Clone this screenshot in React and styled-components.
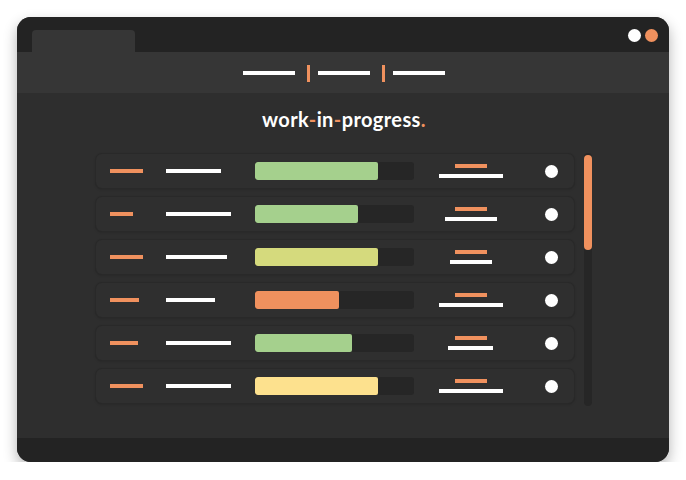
import React from 'react';
import styled, { createGlobalStyle } from 'styled-components';

const GlobalStyle = createGlobalStyle`
  body {
    margin: 0;
    padding: 0;
    background: #ffffff;
    font-family: Lato, "Open Sans", sans-serif;
  }
`;

const ORANGE = '#f0915e';

const rows = [
  { tag: 33, name: 55, fill: 123, color: '#a5d08d', top: 64 },
  { tag: 23, name: 65, fill: 103, color: '#a5d08d', top: 52 },
  { tag: 33, name: 61, fill: 123, color: '#d5da7d', top: 42 },
  { tag: 29, name: 49, fill: 84, color: '#f0915e', top: 64 },
  { tag: 28, name: 65, fill: 97, color: '#a5d08d', top: 45 },
  { tag: 33, name: 65, fill: 123, color: '#fde18e', top: 64 },
];

export default function App() {
  return (
    <>
      <GlobalStyle />
      <Page>
        <Window>
          <TitleBar>
            <Tab />
            <Lights>
              <Light />
              <Light $color={ORANGE} />
            </Lights>
          </TitleBar>
          <Nav>
            <NavLine />
            <NavSep />
            <NavLine />
            <NavSep />
            <NavLine />
          </Nav>
          <Content>
            <Title>
              work<Accent>-</Accent>in<Accent>-</Accent>progress<Accent>.</Accent>
            </Title>
            <ListArea>
              <List>
                {rows.map((r, i) => (
                  <Row key={i}>
                    <Dash $w={r.tag} $color={ORANGE} />
                    <Dash $w={r.name} $color="#ffffff" />
                    <Track>
                      <Fill style={{ width: r.fill, background: r.color }} />
                    </Track>
                    <Stack>
                      <Dash $w={32} $color={ORANGE} />
                      <Dash $w={r.top} $color="#ffffff" />
                    </Stack>
                    <Dot />
                  </Row>
                ))}
              </List>
              <Scrollbar>
                <Thumb />
              </Scrollbar>
            </ListArea>
          </Content>
          <Footer />
        </Window>
      </Page>
    </>
  );
}

const Page = styled.div`
  padding: 17px 0 0 17px;
`;

const Window = styled.div`
  width: 652px;
  height: 445px;
  border-radius: 14px;
  overflow: hidden;
  display: flex;
  flex-direction: column;
  background: #2e2e2e;
  box-shadow: 0 6px 14px rgba(0, 0, 0, 0.3);
`;

const TitleBar = styled.div`
  height: 35px;
  flex-shrink: 0;
  background: #232323;
  display: flex;
  align-items: flex-end;
  justify-content: space-between;
  padding: 0 11px 0 15px;
`;

const Tab = styled.div`
  width: 103px;
  height: 22px;
  background: #363636;
  border-radius: 4px 4px 0 0;
`;

const Lights = styled.div`
  align-self: flex-start;
  margin-top: 12px;
  display: flex;
  gap: 4px;
`;

const Light = styled.div`
  width: 13px;
  height: 13px;
  border-radius: 50%;
  background: ${(p) => p.$color || '#ffffff'};
`;

const Nav = styled.div`
  height: 41px;
  flex-shrink: 0;
  background: #363636;
  display: flex;
  align-items: center;
  justify-content: center;
  padding: 1px 0 0 1px;
  box-sizing: border-box;
`;

const NavLine = styled.div`
  width: 52px;
  height: 4px;
  background: #ffffff;
`;

const NavSep = styled.div`
  width: 3px;
  height: 17px;
  margin: 0 7.5px 0 12.5px;
  background: ${ORANGE};
`;

const Content = styled.div`
  flex: 1;
  background: #2e2e2e;
  display: flex;
  flex-direction: column;
  align-items: center;
  padding-top: 14px;
`;

const Title = styled.div`
  font-family: Lato, sans-serif;
  font-weight: 700;
  font-size: 20px;
  line-height: 25px;
  color: #ffffff;
  letter-spacing: 0.4px;
  margin-left: 2px;
`;

const Accent = styled.span`
  color: ${ORANGE};
`;

const ListArea = styled.div`
  margin-top: 22px;
  margin-left: 1px;
  display: flex;
  gap: 10px;
`;

const List = styled.div`
  width: 478px;
  display: flex;
  flex-direction: column;
  gap: 9px;
`;

const Row = styled.div`
  height: 34px;
  box-sizing: border-box;
  display: grid;
  grid-template-columns: 56px 89px 159px 114px 1fr;
  align-items: center;
  padding: 0 16px 0 14px;
  background: #2f2f2f;
  border-radius: 6px;
  box-shadow: 0 0 0 1px #292929, 0 1px 3px rgba(0, 0, 0, 0.25);
`;

const Dash = styled.div`
  width: ${(p) => p.$w}px;
  height: 4px;
  background: ${(p) => p.$color};
`;

const Track = styled.div`
  height: 18px;
  background: #262626;
  border-radius: 3px;
  overflow: hidden;
`;

const Fill = styled.div`
  height: 100%;
  border-radius: 2px;
`;

const Stack = styled.div`
  display: flex;
  flex-direction: column;
  align-items: center;
  gap: 6px;
  margin-top: -1px;
`;

const Dot = styled.div`
  justify-self: end;
  width: 13px;
  height: 13px;
  border-radius: 50%;
  background: #ffffff;
`;

const Scrollbar = styled.div`
  width: 8px;
  height: 253px;
  margin-top: -1px;
  background: #262626;
  border-radius: 4px;
  padding-top: 2px;
  box-sizing: border-box;
`;

const Thumb = styled.div`
  width: 8px;
  height: 95px;
  border-radius: 4px;
  background: ${ORANGE};
`;

const Footer = styled.div`
  height: 24px;
  flex-shrink: 0;
  background: #232323;
`;
